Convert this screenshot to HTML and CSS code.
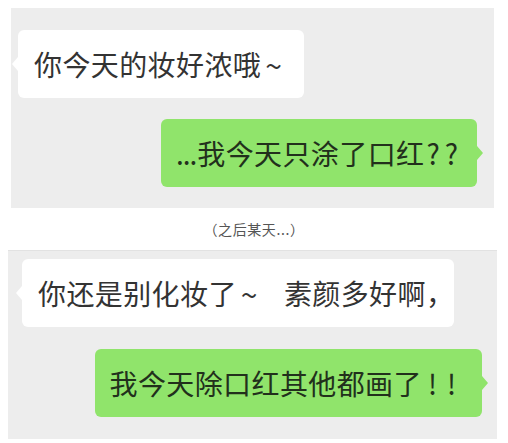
FILE: index.html
```html
<!DOCTYPE html>
<html lang="zh">

<head>
    <meta charset="UTF-8" />
    <meta name="viewport" content="width=device-width, initial-scale=1" />
    <title>聊天记录</title>
    <link rel="stylesheet" href="styles.css">
</head>

<body>

    <div class="chat chat-first">
        <div class="bubble bubble-left">你今天的妆好浓哦 <span class="wave">~</span></div>
        <div class="bubble bubble-right"><span class="dots">...</span>我今天只涂了口红<span class="marks">??</span></div>
    </div>

    <p class="caption">（之后某天...）</p>

    <div class="chat chat-second">
        <div class="bubble bubble-left bubble-wide">你还是别化妆了 <span class="wave">~</span><span class="gap"></span>素颜多好啊，</div>
        <div class="bubble bubble-right bubble-bang">我今天除口红其他都画了<span class="marks marks-bang">!!</span></div>
    </div>

</body>

</html>
```

FILE: styles.css
```css
body {
    margin: 0;
    background: #fff;
    font-family: "Noto Sans CJK SC", "Noto Sans", sans-serif;
}

.chat {
    display: flex;
    flex-direction: column;
    background: #ededed;
}

.chat-first {
    margin: 8px 14px 0 11px;
    height: 200px;
    padding: 22px 17px 0 7px;
    box-sizing: border-box;
    gap: 21px;
}

.chat-second {
    margin: 0 11px 0 8px;
    padding: 8px 15px 22px 14px;
    border-top: 1px solid #e2e2e2;
    gap: 22px;
}

.bubble {
    position: relative;
    height: 68px;
    display: flex;
    align-items: center;
    padding: 0 16px;
    border-radius: 6px;
    font-size: 28px;
    letter-spacing: 0.4px;
    color: #333;
    white-space: nowrap;
}

.bubble-left {
    align-self: flex-start;
    background: #fff;
    padding-right: 22px;
}

.bubble-wide {
    padding-right: 0;
}

.bubble-right {
    align-self: flex-end;
    background: #90e46b;
    color: #22301c;
    padding: 0 14px 0 15px;
}

.bubble-bang {
    padding-right: 16px;
}

.bubble-left::before,
.bubble-right::after {
    content: "";
    position: absolute;
    top: 50%;
    margin-top: -7px;
    border: 7px solid transparent;
}

.bubble-left::before {
    left: -13px;
    border-right: 6px solid #fff;
}

.bubble-right::after {
    right: -13px;
    border-left: 6px solid #90e46b;
}

.wave {
    font-size: 30px;
    margin-left: 4px;
}

.gap {
    display: inline-block;
    width: 26px;
}

.dots {
    letter-spacing: -1px;
    margin-right: 1px;
}

.marks {
    letter-spacing: 5px;
    margin-left: 2px;
}

.marks-bang {
    letter-spacing: 10px;
    margin-left: 6px;
}

.caption {
    margin: 0;
    height: 42px;
    line-height: 42px;
    text-align: center;
    font-size: 14px;
    letter-spacing: 0.6px;
    color: #555;
}
```
